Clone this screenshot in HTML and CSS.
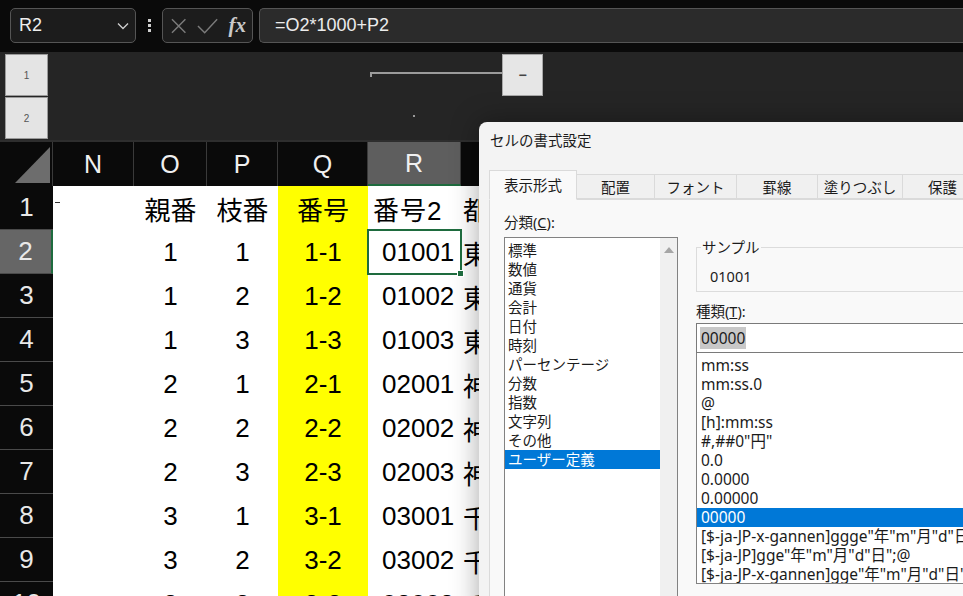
FILE: index.html
```html
<!DOCTYPE html>
<html lang="ja">
  <head>
    <meta charset="UTF-8" />
    <title>セルの書式設定</title>
    <link rel="stylesheet" href="styles.css">
  </head>
  <body>
    <div class="formula-bar">
      <div class="name-box">
        <span>R2</span>
        <svg class="chevron" width="12" height="8" viewBox="0 0 12 8"><path d="M1 1.5 L6 6.5 L11 1.5" fill="none" stroke="#d0d0d0" stroke-width="1.3"/></svg>
      </div>
      <div class="bar-dots"><i></i><i></i><i></i></div>
      <div class="fx-box">
        <svg width="16" height="16" viewBox="0 0 16 16"><path d="M1 1 L15 15 M15 1 L1 15" stroke="#7b7b7b" stroke-width="1.5"/></svg>
        <svg width="22" height="16" viewBox="0 0 22 16"><path d="M1 8 L8 15 L21 1" fill="none" stroke="#7b7b7b" stroke-width="1.5"/></svg>
        <span class="fx">fx</span>
      </div>
      <div class="formula">=O2*1000+P2</div>
    </div>

    <div class="outline">
      <div class="level-btns">
        <div class="level-btn">1</div>
        <div class="level-btn">2</div>
      </div>
      <div class="group-line"></div>
      <div class="group-btn">−</div>
      <div class="group-dot"></div>
    </div>

    <div class="sheet">
      <div class="corner"></div>
      <div class="col-head">N</div>
      <div class="col-head">O</div>
      <div class="col-head">P</div>
      <div class="col-head">Q</div>
      <div class="col-head active">R</div>
      <div class="col-head">S</div>

      <div class="row-head">1</div>
      <div class="cell"><span class="dash"></span></div>
      <div class="cell">親番</div>
      <div class="cell">枝番</div>
      <div class="cell yellow">番号</div>
      <div class="cell heading">番号2</div>
      <div class="cell left">都道府県</div>

      <div class="row-head active">2</div>
      <div class="cell"></div>
      <div class="cell">1</div>
      <div class="cell">1</div>
      <div class="cell yellow">1-1</div>
      <div class="cell code selected">01001</div>
      <div class="cell left">東京都</div>

      <div class="row-head">3</div>
      <div class="cell"></div>
      <div class="cell">1</div>
      <div class="cell">2</div>
      <div class="cell yellow">1-2</div>
      <div class="cell code">01002</div>
      <div class="cell left">東京都</div>

      <div class="row-head">4</div>
      <div class="cell"></div>
      <div class="cell">1</div>
      <div class="cell">3</div>
      <div class="cell yellow">1-3</div>
      <div class="cell code">01003</div>
      <div class="cell left">東京都</div>

      <div class="row-head">5</div>
      <div class="cell"></div>
      <div class="cell">2</div>
      <div class="cell">1</div>
      <div class="cell yellow">2-1</div>
      <div class="cell code">02001</div>
      <div class="cell left">神奈川県</div>

      <div class="row-head">6</div>
      <div class="cell"></div>
      <div class="cell">2</div>
      <div class="cell">2</div>
      <div class="cell yellow">2-2</div>
      <div class="cell code">02002</div>
      <div class="cell left">神奈川県</div>

      <div class="row-head">7</div>
      <div class="cell"></div>
      <div class="cell">2</div>
      <div class="cell">3</div>
      <div class="cell yellow">2-3</div>
      <div class="cell code">02003</div>
      <div class="cell left">神奈川県</div>

      <div class="row-head">8</div>
      <div class="cell"></div>
      <div class="cell">3</div>
      <div class="cell">1</div>
      <div class="cell yellow">3-1</div>
      <div class="cell code">03001</div>
      <div class="cell left">千葉県</div>

      <div class="row-head">9</div>
      <div class="cell"></div>
      <div class="cell">3</div>
      <div class="cell">2</div>
      <div class="cell yellow">3-2</div>
      <div class="cell code">03002</div>
      <div class="cell left">千葉県</div>

      <div class="row-head">10</div>
      <div class="cell"></div>
      <div class="cell">3</div>
      <div class="cell">3</div>
      <div class="cell yellow">3-3</div>
      <div class="cell code">03003</div>
      <div class="cell left">千葉県</div>
    </div>

    <!-- ダイアログ -->
    <div class="dialog">
      <div class="dialog-title">セルの書式設定</div>
      <div class="tabs">
        <div class="tab current">表示形式</div>
        <div class="tab" style="width: 78px">配置</div>
        <div class="tab" style="width: 82px">フォント</div>
        <div class="tab" style="width: 81px">罫線</div>
        <div class="tab" style="width: 85px">塗りつぶし</div>
        <div class="tab" style="width: 80px">保護</div>
      </div>
      <div class="tab-page">
        <div class="category">
          <div class="label">分類(<u>C</u>):</div>
          <div class="listbox">
            <ul class="items">
              <li>標準</li>
              <li>数値</li>
              <li>通貨</li>
              <li>会計</li>
              <li>日付</li>
              <li>時刻</li>
              <li>パーセンテージ</li>
              <li>分数</li>
              <li>指数</li>
              <li>文字列</li>
              <li>その他</li>
              <li class="chosen">ユーザー定義</li>
            </ul>
            <div class="scrollbar">
              <svg width="12" height="8" viewBox="0 0 12 8"><path d="M1 7 L6 1 L11 7 Z" fill="#a6a6a6"/></svg>
            </div>
          </div>
        </div>
        <div class="format">
          <fieldset class="sample">
            <legend>サンプル</legend>
            <div class="sample-value">01001</div>
          </fieldset>
          <div class="label type-label">種類(<u>T</u>):</div>
          <div class="type-input"><span class="sel">00000</span></div>
          <ul class="type-list">
            <li>mm:ss</li>
            <li>mm:ss.0</li>
            <li>@</li>
            <li>[h]:mm:ss</li>
            <li>#,##0"円"</li>
            <li>0.0</li>
            <li>0.0000</li>
            <li>0.00000</li>
            <li class="chosen">00000</li>
            <li>[$-ja-JP-x-gannen]ggge"年"m"月"d"日";@</li>
            <li>[$-ja-JP]gge"年"m"月"d"日";@</li>
            <li>[$-ja-JP-x-gannen]gge"年"m"月"d"日";@</li>
          </ul>
        </div>
      </div>
    </div>
  </body>
</html>
```

FILE: styles.css
```css
body {
  margin: 0;
  width: 963px;
  height: 596px;
  overflow: hidden;
  position: relative;
  background-color: #0a0a0a;
  font-family: "Liberation Sans", "Noto Sans CJK JP", sans-serif;
}

/* 数式バー */
.formula-bar {
  display: flex;
  align-items: center;
  height: 52px;
  padding: 8px 0 9px 10px;
  box-sizing: border-box;
}

.name-box,
.fx-box,
.formula {
  height: 35px;
  box-sizing: border-box;
  border: 1px solid #555;
  border-radius: 5px;
  background-color: #1c1c1c;
  display: flex;
  align-items: center;
}

.name-box {
  width: 126px;
  padding: 0 6px 0 8px;
  justify-content: space-between;
  color: #eee;
  font-size: 18px;
}

.bar-dots {
  display: flex;
  flex-direction: column;
  gap: 2px;
  margin: 0 11px 0 12px;
}

.bar-dots i {
  width: 3px;
  height: 3px;
  background-color: #cfcfcf;
}

.fx-box {
  width: 91px;
  padding: 0 6px 0 8px;
  gap: 11px;
}

.fx {
  font-family: "Liberation Serif", serif;
  font-style: italic;
  font-weight: bold;
  font-size: 21px;
  color: #c9c9c9;
  margin-left: -1px;
}

.formula {
  flex: 1;
  margin-left: 6px;
  border-right: none;
  border-radius: 5px 0 0 5px;
  background-color: #2b2b2b;
  padding-left: 15px;
  color: #ececec;
  font-size: 18px;
}

/* アウトライン */
.outline {
  position: relative;
  height: 88px;
  background-color: #252525;
  border-bottom: 2px solid #2e2e2e;
}

.level-btns {
  display: flex;
  flex-direction: column;
  gap: 1px;
  padding: 2px 0 0 5px;
}

.level-btn {
  width: 43px;
  height: 42px;
  box-sizing: border-box;
  background-color: #e4e4e4;
  border: 1px solid #9a9a9a;
  color: #555;
  font-size: 10px;
  display: flex;
  align-items: center;
  justify-content: center;
}

.group-line {
  position: absolute;
  left: 370px;
  top: 20px;
  width: 132px;
  height: 5px;
  border-top: 2px solid #9b9b9b;
  border-left: 2px solid #9b9b9b;
  box-sizing: border-box;
}

.group-btn {
  position: absolute;
  left: 502px;
  top: 2px;
  width: 41px;
  height: 42px;
  box-sizing: border-box;
  background-color: #e6e6e6;
  border: 1px solid #a8a8a8;
  color: #444;
  font-size: 14px;
  font-weight: bold;
  display: flex;
  align-items: center;
  justify-content: center;
}

.group-dot {
  position: absolute;
  left: 413px;
  top: 63px;
  width: 2px;
  height: 2px;
  background-color: #999;
}

/* シート */
.sheet {
  display: grid;
  grid-template-columns: 53px 81px 73px 71px 90px 93px 1fr;
  grid-auto-rows: 44px;
}

.corner {
  position: relative;
  background-color: #0a0a0a;
  border-right: 1px solid #3a3a3a;
}

.corner::after {
  content: "";
  position: absolute;
  left: 15px;
  top: 5px;
  width: 35px;
  height: 36px;
  background-color: #6d6d6d;
  clip-path: polygon(0 100%, 100% 100%, 100% 0);
}

.col-head {
  background-color: #0a0a0a;
  border-right: 1px solid #3a3a3a;
  color: #f0f0f0;
  font-size: 25px;
  display: flex;
  align-items: center;
  justify-content: center;
}

.col-head.active {
  background-color: #5e5e5e;
  border-bottom: 2px solid #1e6b3e;
}

.row-head {
  background-color: #0a0a0a;
  border-bottom: 1px solid #4a4a4a;
  color: #e8e8e8;
  font-size: 26px;
  display: flex;
  align-items: center;
  justify-content: center;
}

.row-head.active {
  background-color: #666;
  border-right: 2px solid #1e6b3e;
}

.cell {
  position: relative;
  background-color: #fff;
  color: #000;
  font-size: 26px;
  display: flex;
  align-items: center;
  justify-content: center;
  white-space: nowrap;
}

.cell.code {
  justify-content: flex-start;
  padding-left: 14px;
}

.cell.heading {
  justify-content: flex-start;
  padding-left: 5px;
  letter-spacing: 1px;
}

.cell.left {
  justify-content: flex-start;
  padding-left: 2px;
  overflow: hidden;
}

.cell.yellow {
  background-color: #ffff00;
}

.cell.selected {
  outline: 2px solid #1e6b3e;
  outline-offset: -1px;
  z-index: 1;
}

.cell.selected::after {
  content: "";
  position: absolute;
  right: -3px;
  bottom: -3px;
  width: 5px;
  height: 5px;
  background-color: #1e6b3e;
  border: 1px solid #fff;
}

.dash {
  position: absolute;
  left: 2px;
  top: 16px;
  width: 5px;
  height: 1px;
  background-color: #333;
}

/* ダイアログ */
.dialog {
  position: absolute;
  left: 479px;
  top: 122px;
  width: 520px;
  height: 500px;
  background-color: #f3f3f3;
  border-radius: 8px 0 0 0;
  box-shadow: 0 0 28px rgba(0, 0, 0, 0.35);
  font-family: "Noto Sans", "Noto Sans CJK JP", sans-serif;
  color: #1b1b1b;
  font-size: 14.5px;
}

.dialog-title {
  padding: 8px 0 0 11px;
  height: 40px;
  box-sizing: border-box;
  line-height: 20px;
}

.tabs {
  display: flex;
  align-items: flex-end;
  height: 38px;
  padding-left: 10px;
  margin-bottom: -1px;
  position: relative;
  z-index: 1;
}

.tab {
  height: 25px;
  box-sizing: border-box;
  border: 1px solid #dadada;
  border-left: none;
  background-color: #f0f0f0;
  display: flex;
  align-items: center;
  justify-content: center;
  margin-bottom: 1px;
  flex-shrink: 0;
}

.tab.current {
  width: 88px;
  height: 30px;
  border-left: 1px solid #dadada;
  border-bottom: 1px solid #f9f9f9;
  background-color: #f9f9f9;
  margin-bottom: 0;
  padding-bottom: 2px;
}

.tab-page {
  display: flex;
  gap: 18px;
  margin-left: 10px;
  padding: 13px 0 0 14px;
  height: 400px;
  background-color: #f9f9f9;
  border: 1px solid #dadada;
}

.label {
  line-height: 18px;
  margin-bottom: 6px;
}

.listbox {
  display: flex;
  width: 174px;
  height: 380px;
  box-sizing: border-box;
  border: 1px solid #828282;
  background-color: #fff;
}

.items,
.type-list {
  list-style: none;
  margin: 0;
  padding: 3px 0 0 0;
  flex: 1;
}

.items li,
.type-list li {
  line-height: 19px;
  height: 19px;
  padding-left: 3px;
  white-space: nowrap;
}

.items li.chosen,
.type-list li.chosen {
  background-color: #0078d7;
  color: #fff;
}

.scrollbar {
  width: 17px;
  background-color: #f0f0f0;
  display: flex;
  justify-content: center;
  padding-top: 8px;
  box-sizing: border-box;
}

.format {
  width: 300px;
  margin-top: 25px;
}

.sample {
  margin: 0;
  padding: 2px 12px 8px 12px;
  border: 1px solid #dcdcdc;
  height: 54px;
  box-sizing: border-box;
}

.sample legend {
  padding: 0 1px;
  margin-left: -8px;
  line-height: 18px;
}

.sample-value {
  line-height: 18px;
  margin-top: 9px;
  margin-left: 1px;
}

.type-label {
  margin-top: 10px;
  margin-bottom: 3px;
}

.type-input {
  height: 30px;
  box-sizing: border-box;
  border: 1px solid #7a7a7a;
  background-color: #fff;
  display: flex;
  align-items: center;
  padding-left: 3px;
  font-size: 15.5px;
}

.sel {
  background-color: #c8c8c8;
  padding: 0 1px;
}

.type-list {
  height: 231px;
  box-sizing: border-box;
  border: 1px solid #828282;
  border-top: none;
  background-color: #fff;
  overflow: hidden;
  font-size: 15.5px;
}

.type-list li {
  padding-left: 4px;
}
```
